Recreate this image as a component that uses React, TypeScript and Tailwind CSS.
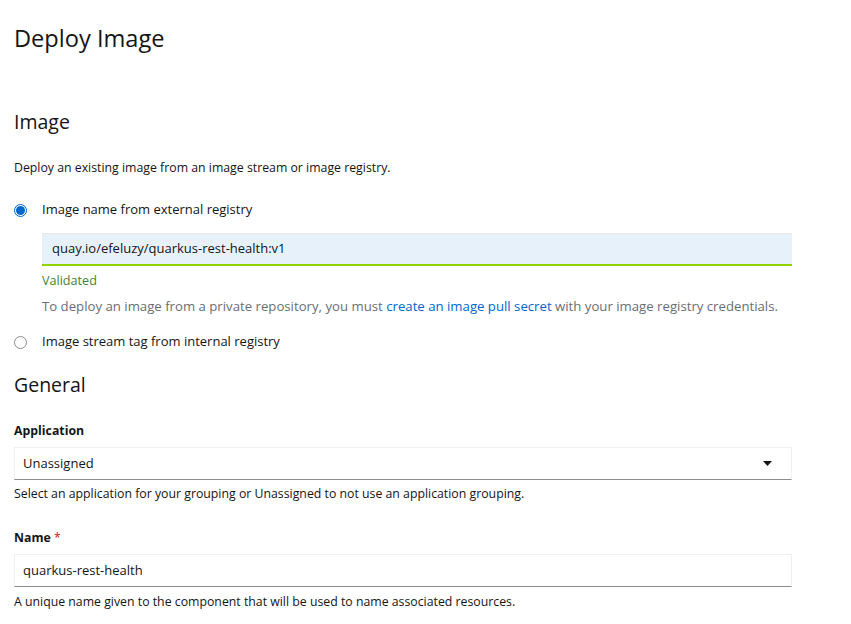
import React from "react";

export default function App() {
  return (
    <div
      className="w-[851px] h-[624px] bg-white text-[#151515] overflow-hidden"
      style={{ fontFamily: '"Open Sans", "Liberation Sans", sans-serif' }}
    >
      <div className="pl-[14px] w-[792px]">
        <h1 className="text-[23.6px] leading-[28px] pt-[24px] h-[52px]">Deploy Image</h1>

        <h2 className="text-[19.5px] leading-[24px] mt-[58px]">Image</h2>
        <p className="text-[12.3px] leading-[18px] mt-[25px]">
          Deploy an existing image from an image stream or image registry.
        </p>

        <div className="flex items-center mt-[23px] h-[20px]">
          <span className="w-[13px] h-[13px] rounded-full border border-[#0066cc] flex items-center justify-center">
            <span className="w-[9px] h-[9px] rounded-full bg-[#0066cc]" />
          </span>
          <span className="ml-[15px] text-[13px]">Image name from external registry</span>
        </div>

        <div className="ml-[28px] mt-[13px]">
          <div className="h-[33px] bg-[#e7f1fa] border-b-2 border-[#92d400] border-t border-t-[#e7e7e7] flex items-center pl-[10px] text-[13px]">
            quay.io/efeluzy/quarkus-rest-health:v1
          </div>
          <div className="text-[12.6px] text-[#3e8635] mt-[6px] leading-[18px]">Validated</div>
          <div className="text-[13.2px] text-[#6a6e73] mt-[7px] leading-[18px]">
            To deploy an image from a private repository, you must{" "}
            <span className="text-[#0066cc]">create an image pull secret</span> with your image registry credentials.
          </div>
        </div>

        <div className="flex items-center mt-[17px] h-[20px]">
          <span className="w-[13px] h-[13px] rounded-full border border-[#8a8d90]" />
          <span className="ml-[15px] text-[13px]">Image stream tag from internal registry</span>
        </div>

        <h2 className="text-[19.5px] leading-[24px] mt-[21px]">General</h2>

        <div className="text-[12.3px] font-bold mt-[25px] leading-[18px]">Application</div>
        <div className="mt-[7px] h-[33px] border border-[#f0f0f0] border-b-[#8a8d90] flex items-center pl-[8px] pr-[19px] text-[13px]">
          <span className="flex-1">Unassigned</span>
          <svg width="9" height="5" viewBox="0 0 9 5">
            <path d="M0 0 H9 L4.5 5 Z" fill="#151515" />
          </svg>
        </div>
        <div className="text-[12.3px] mt-[5px] leading-[18px]">
          Select an application for your grouping or Unassigned to not use an application grouping.
        </div>

        <div className="text-[12.3px] font-bold mt-[26px] leading-[18px]">
          Name <span className="text-[#c9190b] font-normal">*</span>
        </div>
        <div className="mt-[7px] h-[33px] border border-[#f0f0f0] border-b-[#8a8d90] flex items-center pl-[8px] text-[13px]">
          quarkus-rest-health
        </div>
        <div className="text-[12.3px] mt-[6px] leading-[18px]">
          A unique name given to the component that will be used to name associated resources.
        </div>
      </div>
    </div>
  );
}
